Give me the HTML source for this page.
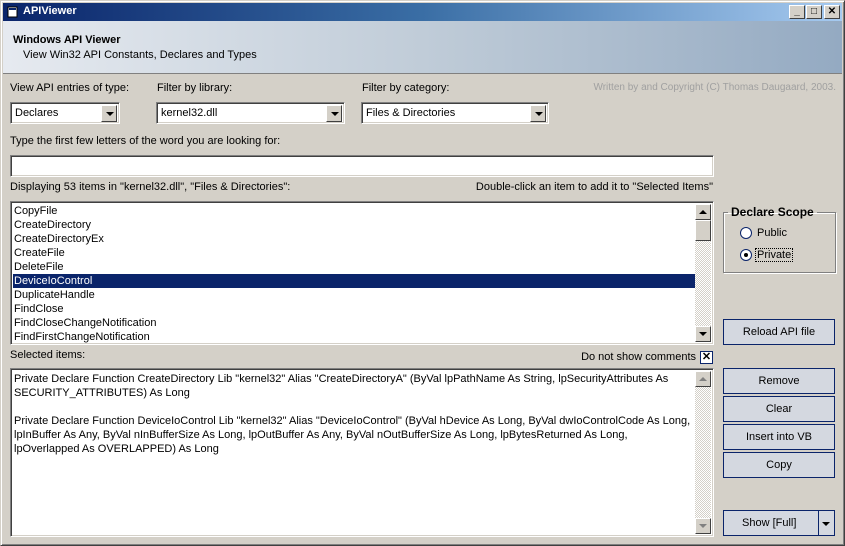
<!DOCTYPE html>
<html><head><style>
*{box-sizing:border-box;margin:0;padding:0}
body{width:845px;height:546px;background:#d4d0c8;font-family:"Liberation Sans",sans-serif;font-size:11px;color:#000;position:relative;overflow:hidden}
.a{position:absolute;white-space:nowrap}
.win{position:absolute;left:0;top:0;width:845px;height:546px;border:1px solid;border-color:#d4d0c8 #404040 #404040 #d4d0c8;box-shadow:inset 1px 1px 0 #fff,inset -1px -1px 0 #808080}
.title{position:absolute;left:3px;top:3px;width:839px;height:18px;background:linear-gradient(90deg,#0a246a,#3a6ea5 50%,#a6caf0)}
.title span{position:absolute;left:20px;top:2px;color:#fff;font-weight:bold;font-size:11px}
.tb{position:absolute;top:2px;width:16px;height:14px;background:#d4d0c8;border:1px solid;border-color:#fff #404040 #404040 #fff;font-size:10px;font-weight:bold;text-align:center;line-height:12px}
.hdr{position:absolute;left:3px;top:21px;width:839px;height:53px;background:linear-gradient(90deg,#e6eaf0,#c0ccd8 50%,#94aac2);border-bottom:1px solid #808080}
.sunk{position:absolute;background:#fff;border:1px solid;border-color:#808080 #fff #fff #808080;box-shadow:inset 1px 1px 0 #404040,inset -1px -1px 0 #d4d0c8}
.combo .arr{position:absolute;right:2px;top:2px;width:16px;height:17px;background:#d4d0c8;border:1px solid;border-color:#fff #404040 #404040 #fff}
.arr:after{content:"";position:absolute;left:4px;top:6px;border-left:4px solid transparent;border-right:4px solid transparent;border-top:4px solid #000}
.combo span{position:absolute;left:4px;top:4px}
.btn{position:absolute;left:723px;width:112px;height:26px;border:1px solid #0a246a;background:#d4d8e0;text-align:center;line-height:24px}
.sb{position:absolute;right:2px;top:2px;bottom:2px;width:16px;background:repeating-conic-gradient(#fff 0 25%,#d4d0c8 0 50%) 0 0/2px 2px}
.sbb{position:absolute;left:0;width:16px;height:16px;background:#d4d0c8;border:1px solid;border-color:#fff #404040 #404040 #fff}
.up:after,.dn:after{content:"";position:absolute;left:3px;border-left:4px solid transparent;border-right:4px solid transparent}
.up:after{top:5px;border-bottom:4px solid #000}
.dn:after{top:5px;border-top:4px solid #000}
.g .up:after{border-bottom-color:#808080}.g .dn:after{border-top-color:#808080}
.it{position:absolute;left:2px;width:683px;height:14px;padding-left:1px;line-height:14px}
</style></head><body>
<div class="win"></div>
<div class="title"><svg class="a" style="left:3px;top:2px" width="14" height="14"><rect x="2" y="2" width="9" height="10" fill="#fff" stroke="#000" stroke-width="1"/><rect x="3" y="3" width="7" height="2" fill="#0a246a"/></svg><span>APIViewer</span>
<div class="tb" style="left:786px">_</div><div class="tb" style="left:803px">□</div><div class="tb" style="left:821px">✕</div></div>
<div class="hdr"><div class="a" style="left:10px;top:13px;font-weight:bold">Windows API Viewer</div><div class="a" style="left:20px;top:28px">View Win32 API Constants, Declares and Types</div></div>
<div class="a" style="left:10px;top:82px">View API entries of type:</div>
<div class="a" style="left:157px;top:82px">Filter by library:</div>
<div class="a" style="left:362px;top:82px">Filter by category:</div>
<div class="a" style="right:9px;top:82px;color:#a0a0a0;font-size:10px">Written by and Copyright (C) Thomas Daugaard, 2003.</div>
<div class="sunk combo" style="left:10px;top:102px;width:110px;height:22px"><span>Declares</span><div class="arr"></div></div>
<div class="sunk combo" style="left:156px;top:102px;width:189px;height:22px"><span>kernel32.dll</span><div class="arr"></div></div>
<div class="sunk combo" style="left:361px;top:102px;width:188px;height:22px"><span>Files &amp; Directories</span><div class="arr"></div></div>
<div class="a" style="left:10px;top:135px">Type the first few letters of the word you are looking for:</div>
<div class="sunk" style="left:10px;top:155px;width:704px;height:22px"></div>
<div class="a" style="left:10px;top:181px">Displaying 53 items in "kernel32.dll", "Files &amp; Directories":</div>
<div class="a" style="right:132px;top:181px">Double-click an item to add it to "Selected Items"</div>
<div class="sunk" style="left:10px;top:201px;width:704px;height:144px">
<div class="it" style="top:2px">CopyFile</div><div class="it" style="top:16px">CreateDirectory</div><div class="it" style="top:30px">CreateDirectoryEx</div><div class="it" style="top:44px">CreateFile</div><div class="it" style="top:58px">DeleteFile</div><div class="it" style="top:72px;background:#0a246a;color:#fff">DeviceIoControl</div><div class="it" style="top:86px">DuplicateHandle</div><div class="it" style="top:100px">FindClose</div><div class="it" style="top:114px">FindCloseChangeNotification</div><div class="it" style="top:128px">FindFirstChangeNotification</div>
<div class="sb"><div class="sbb up" style="top:0"></div><div class="sbb" style="top:16px;height:21px"></div><div class="sbb dn" style="bottom:0"></div></div></div>
<fieldset style="position:absolute;left:723px;top:205px;width:113px;height:68px;border:1px solid #808080;box-shadow:1px 1px 0 #fff,inset 1px 1px 0 #fff"><legend style="margin-left:4px;padding:0 3px;font-weight:bold;font-size:12px">Declare Scope</legend></fieldset>
<svg class="a" style="left:739px;top:226px" width="14" height="36"><circle cx="7" cy="7" r="5.5" fill="#fff" stroke="#0a246a"/><circle cx="7" cy="29" r="5.5" fill="#fff" stroke="#0a246a"/><circle cx="7" cy="29" r="2" fill="#000"/></svg>
<div class="a" style="left:757px;top:227px">Public</div>
<div class="a" style="left:755px;top:248px;border:1px dotted #000;padding:0 1px">Private</div>
<div class="btn" style="top:319px">Reload API file</div>
<div class="a" style="left:10px;top:349px">Selected items:</div>
<div class="a" style="right:149px;top:351px">Do not show comments</div>
<div class="a" style="left:700px;top:351px;width:13px;height:13px;border:1px solid #0a246a;background:#fff;font-size:11px;font-weight:bold;line-height:11px;text-align:center">✕</div>
<div class="sunk" style="left:10px;top:368px;width:704px;height:169px;line-height:14px;padding:3px 22px 0 3px;white-space:normal">Private Declare Function CreateDirectory Lib "kernel32" Alias "CreateDirectoryA" (ByVal lpPathName As String, lpSecurityAttributes As SECURITY_ATTRIBUTES) As Long<br><br>Private Declare Function DeviceIoControl Lib "kernel32" Alias "DeviceIoControl" (ByVal hDevice As Long, ByVal dwIoControlCode As Long, lpInBuffer As Any, ByVal nInBufferSize As Long, lpOutBuffer As Any, ByVal nOutBufferSize As Long, lpBytesReturned As Long, lpOverlapped As OVERLAPPED) As Long
<div class="sb g"><div class="sbb up" style="top:0"></div><div class="sbb dn" style="bottom:0"></div></div></div>
<div class="btn" style="top:368px">Remove</div>
<div class="btn" style="top:396px">Clear</div>
<div class="btn" style="top:424px">Insert into VB</div>
<div class="btn" style="top:452px">Copy</div>
<div class="btn" style="top:510px;text-align:left;padding-left:18px">Show [Full]<div style="position:absolute;left:94px;top:-1px;width:1px;height:26px;background:#0a246a"></div><div style="position:absolute;left:98px;top:11px;border-left:4px solid transparent;border-right:4px solid transparent;border-top:4px solid #000"></div></div>
</body></html>
